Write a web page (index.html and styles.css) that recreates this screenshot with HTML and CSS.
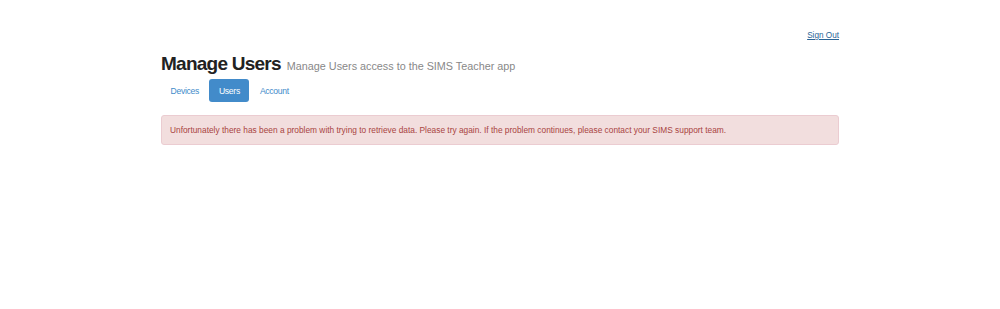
FILE: index.html
```html
<!DOCTYPE html>
<html>
<head>
<meta charset="utf-8">
<link rel="stylesheet" href="styles.css">
</head>
<body>
<div class="container">
  <div class="topbar"><a class="signout" href="#">Sign Out</a></div>
  <div class="header">
    <h1 class="title">Manage Users</h1>
    <span class="subtitle">Manage Users access to the SIMS Teacher app</span>
  </div>
  <ul class="pills">
    <li><a href="#">Devices</a></li>
    <li class="active"><a href="#">Users</a></li>
    <li><a href="#">Account</a></li>
  </ul>
  <div class="alert">Unfortunately there has been a problem with trying to retrieve data. Please try again. If the problem continues, please contact your SIMS support team.</div>
</div>
</body>
</html>
```
FILE: styles.css
```css
html, body { margin: 0; padding: 0; background: #fff; }
body { font-family: "Liberation Sans", Arial, sans-serif; color: #333; }
.container { width: 678px; margin: 0 auto; padding-top: 31px; }
.topbar { display: flex; justify-content: flex-end; height: 10px; line-height: 10px; }
.signout { font-size: 8.2px; color: #2a6496; text-decoration: underline; }
.header { display: flex; align-items: baseline; margin-top: 10px; }
.title { font-size: 19px; letter-spacing: -0.75px; font-weight: bold; margin: 0; color: #222; line-height: 26px; }
.subtitle { font-size: 10.8px; color: #888; margin-left: 6px; }
.pills { list-style: none; margin: 2px 0 0; padding: 0; display: flex; gap: 1px; }
.pills a { display: block; padding: 0 9.5px; height: 23px; line-height: 24px; font-size: 8.6px; letter-spacing: -0.3px; color: #428bca; text-decoration: none; border-radius: 3px; }
.pills li.active a { background: #428bca; color: #fff; }
.alert { margin-top: 13px; height: 28px; line-height: 28px; padding: 0 8px; background: #f2dede; border: 1px solid #ebccd1; border-radius: 3px; color: #a94442; font-size: 8.35px; }
```
